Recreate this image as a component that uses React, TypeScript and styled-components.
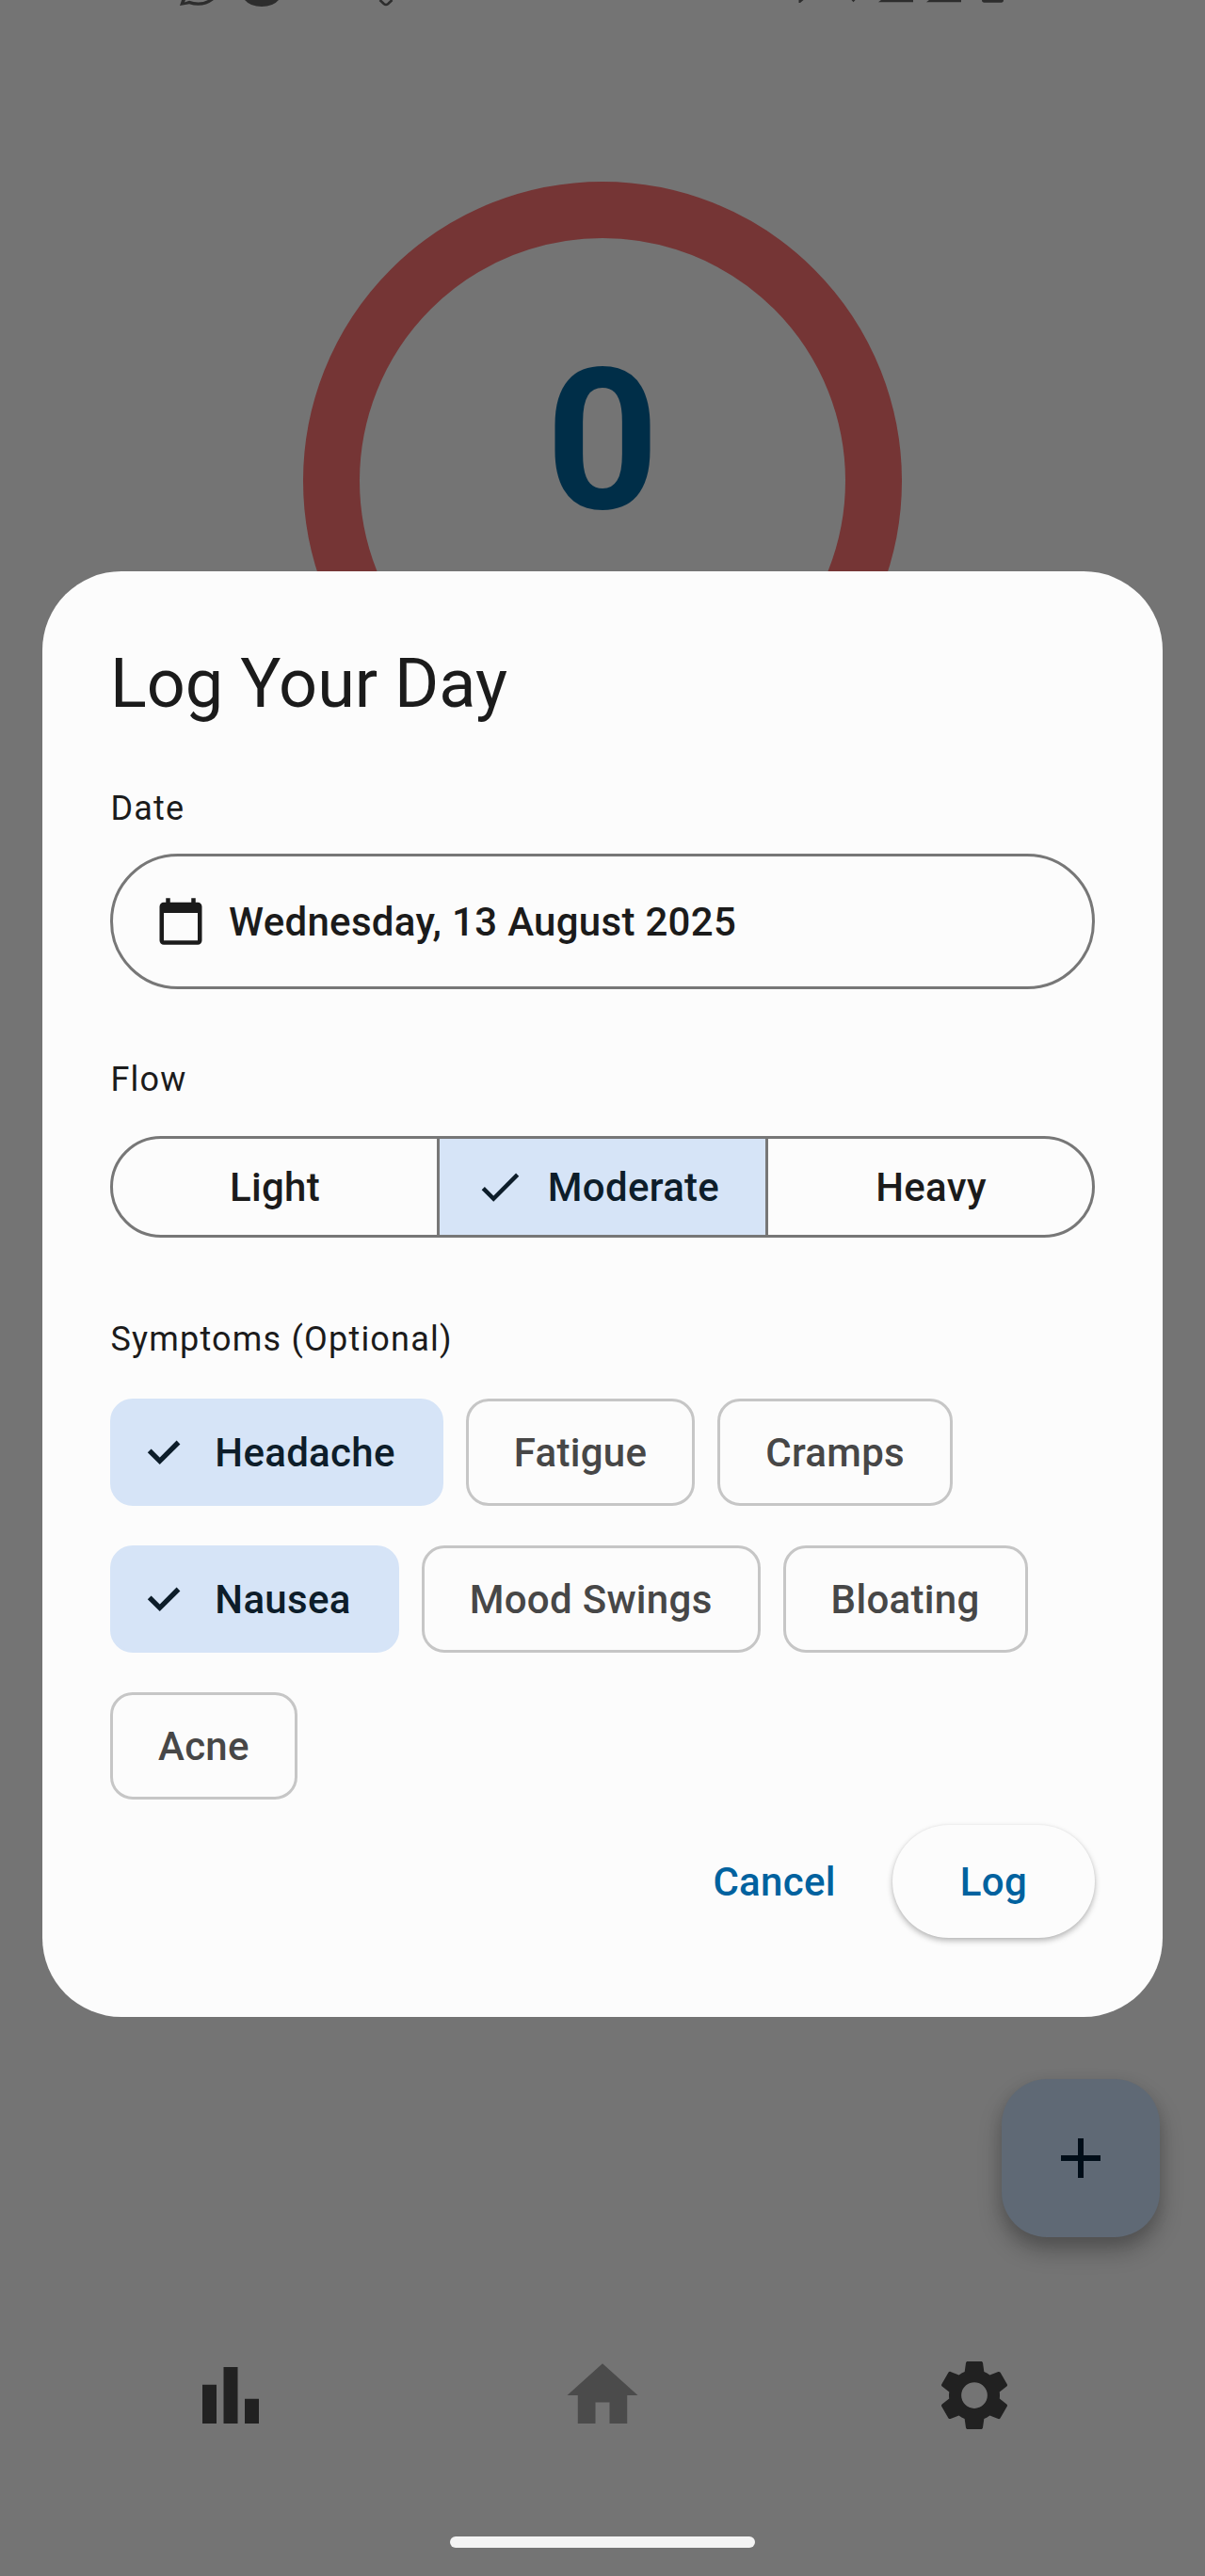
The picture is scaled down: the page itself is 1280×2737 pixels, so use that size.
import React, { useState } from 'react';
import styled, { createGlobalStyle } from 'styled-components';

const GlobalStyle = createGlobalStyle`
  *, *::before, *::after { box-sizing: border-box; }
  body { margin: 0; background: #747474; }
  button { font: inherit; letter-spacing: inherit; cursor: pointer; margin: 0; }
`;

const Screen = styled.div`
  position: relative;
  display: flex;
  flex-direction: column;
  width: 1280px;
  height: 2737px;
  overflow: hidden;
  background: #747474;
  font-family: Roboto, 'Liberation Sans', sans-serif;
  font-size: 42px;
  font-weight: 500;
  letter-spacing: 0.3px;
`;

const StatusBar = styled.header`
  height: 193px;

  svg {
    display: block;
  }
`;

const CycleRing = styled.section`
  display: flex;
  justify-content: center;
  align-self: center;
  width: 636px;
  height: 636px;
  padding-top: 92px;
  border: 60px solid #753535;
  border-radius: 50%;
`;

const DayCount = styled.span`
  height: 246px;
  font-size: 210px;
  line-height: 246px;
  font-weight: 700;
  letter-spacing: 0;
  color: #002e48;
`;

const Spacer = styled.div`
  flex: 1;
`;

const Fab = styled.button`
  position: absolute;
  right: 48px;
  bottom: 360px;
  display: grid;
  place-items: center;
  width: 168px;
  height: 168px;
  padding: 0;
  border: 0;
  border-radius: 48px;
  background: #5f6975;
  color: #000d18;
  box-shadow: 0 14px 24px rgba(0, 0, 0, 0.28), 0 4px 16px rgba(0, 0, 0, 0.08);
`;

const NavBar = styled.nav`
  display: grid;
  grid-template-columns: repeat(3, 1fr);
  justify-items: center;
  padding: 0 48px;
  height: 195px;
`;

const NavItem = styled.button<{ $active?: boolean }>`
  width: 90px;
  height: 90px;
  padding: 0;
  border: 0;
  background: none;
  color: ${(p) => (p.$active ? '#4b4b4b' : '#212121')};
`;

const GestureBar = styled.div`
  align-self: center;
  width: 324px;
  height: 12px;
  margin-bottom: 30px;
  border-radius: 6px;
  background: #f4f4f4;
`;

const ModalLayer = styled.div`
  position: absolute;
  inset: 0;
  display: flex;
  justify-content: center;
  align-items: flex-start;
  padding-top: 607px;
  pointer-events: none;
`;

const Dialog = styled.div`
  display: flex;
  flex-direction: column;
  width: 1190px;
  height: 1536px;
  padding: 72px;
  border-radius: 84px;
  background: #fcfcfc;
  color: #1b1b1b;
  pointer-events: auto;
`;

const Title = styled.h1`
  margin: 0 0 60px;
  font-size: 72px;
  line-height: 96px;
  font-weight: 400;
  letter-spacing: 0;
`;

const FieldLabel = styled.div<{ $gap: number }>`
  margin-bottom: ${(p) => p.$gap}px;
  padding-left: 0.5px;
  font-size: 36px;
  line-height: 48px;
  font-weight: 400;
  letter-spacing: 1.2px;
`;

const DateField = styled.button`
  display: flex;
  align-items: center;
  gap: 24px;
  height: 144px;
  margin-bottom: 72px;
  padding: 0 45px;
  border: 3px solid #777777;
  border-radius: 72px;
  background: none;
  color: inherit;
`;

const Segments = styled.div`
  display: grid;
  grid-template-columns: 344px 349px 347px;
  height: 108px;
  margin-bottom: 84px;
  border: 3px solid #777777;
  border-radius: 54px;
  overflow: hidden;
`;

const Segment = styled.button<{ $selected: boolean }>`
  display: flex;
  align-items: center;
  justify-content: center;
  gap: 24px;
  padding: ${(p) => (p.$selected ? '0 12px 0 0' : '0')};
  border: 0 solid #777777;
  background: ${(p) => (p.$selected ? '#d6e4f7' : 'transparent')};
  color: ${(p) => (p.$selected ? '#0d1d2a' : 'inherit')};

  & + & {
    border-left-width: 3px;
  }

  &:last-child {
    padding-left: 2px;
  }
`;

const Chips = styled.div`
  display: flex;
  flex-wrap: wrap;
  gap: 42px 24px;
  margin-bottom: 27px;
`;

const Chip = styled.button<{ $selected: boolean }>`
  display: flex;
  align-items: center;
  gap: 31.3px;
  height: 114px;
  padding: ${(p) => (p.$selected ? '0 48px 0 32px' : '0 48px')};
  border: 3px solid ${(p) => (p.$selected ? '#d6e4f7' : '#c6c6c6')};
  border-radius: 24px;
  background: ${(p) => (p.$selected ? '#d6e4f7' : 'transparent')};
  color: ${(p) => (p.$selected ? '#0d1d2a' : '#474747')};
`;

const Actions = styled.div`
  display: flex;
  justify-content: flex-end;
  gap: 24px;
`;

const ActionButton = styled.button<{ $raised?: boolean }>`
  height: 120px;
  padding: 0 ${(p) => (p.$raised ? 72 : 36)}px;
  border: 0;
  border-radius: 60px;
  background: #fcfcfc;
  color: #00629f;
  box-shadow: ${(p) =>
    p.$raised ? '0 3px 6px rgba(0, 0, 0, 0.28), 0 0 3px rgba(0, 0, 0, 0.05)' : 'none'};
`;

const icons = {
  calendar:
    'M20 3h-1V1h-2v2H7V1H5v2H4c-1.1 0-2 .9-2 2v16c0 1.1.9 2 2 2h16c1.1 0 2-.9 2-2V5c0-1.1-.9-2-2-2zm0 18H4V8h16v13z',
  check: 'M9 16.17 4.83 12l-1.42 1.41L9 19 21 7l-1.41-1.41z',
  add: 'M19 13h-6v6h-2v-6H5v-2h6V5h2v6h6v2z',
  chart: 'M4 9h4v11H4zm12 4h4v7h-4zm-6-9h4v16h-4z',
  home: 'M10 20v-6h4v6h5v-8h3L12 3 2 12h3v8z',
  settings:
    'M19.14 12.94c.04-.3.06-.61.06-.94 0-.32-.02-.64-.07-.94l2.03-1.58c.18-.14.23-.41.12-.61l-1.92-3.32c-.12-.22-.37-.29-.59-.22l-2.39.96c-.5-.38-1.03-.7-1.62-.94l-.36-2.54c-.04-.24-.24-.41-.48-.41h-3.84c-.24 0-.43.17-.47.41l-.36 2.54c-.59.24-1.13.57-1.62.94l-2.39-.96c-.22-.08-.47 0-.59.22L2.74 8.87c-.12.21-.08.47.12.61l2.03 1.58c-.05.3-.09.63-.09.94s.02.64.07.94l-2.03 1.58c-.18.14-.23.41-.12.61l1.92 3.32c.12.22.37.29.59.22l2.39-.96c.5.38 1.03.7 1.62.94l.36 2.54c.05.24.24.41.48.41h3.84c.24 0 .44-.17.47-.41l.36-2.54c.59-.24 1.13-.56 1.62-.94l2.39.96c.22.08.47 0 .59-.22l1.92-3.32c.12-.22.07-.47-.12-.61l-2.01-1.58zM12 15.7c-2.04 0-3.7-1.66-3.7-3.7s1.66-3.7 3.7-3.7 3.7 1.66 3.7 3.7-1.66 3.7-3.7 3.7z',
};

function Icon({ name, size }: { name: keyof typeof icons; size: number }) {
  return (
    <svg width={size} height={size} viewBox="0 0 24 24" fill="currentColor" display="block">
      <path d={icons[name]} />
    </svg>
  );
}

function ChipCheck() {
  return (
    <svg width="45" height="45" viewBox="0 0 45 45" fill="none" stroke="currentColor" strokeWidth="5.4">
      <path d="M6.7 20.3 17.7 31.3 37.5 11.5" />
    </svg>
  );
}

const flows = ['Light', 'Moderate', 'Heavy'];
const symptoms = ['Headache', 'Fatigue', 'Cramps', 'Nausea', 'Mood Swings', 'Bloating', 'Acne'];

export default function App() {
  const [flow, setFlow] = useState('Moderate');
  const [picked, setPicked] = useState<string[]>(['Headache', 'Nausea']);

  const toggle = (name: string) =>
    setPicked((prev) => (prev.includes(name) ? prev.filter((n) => n !== name) : [...prev, name]));

  return (
    <>
      <GlobalStyle />
      <Screen>
        <StatusBar>
          <svg width="1280" height="10" viewBox="0 0 1280 10" fill="#2d2d2d">
            <path d="M193 0h4l-1 2.4 5-1.6q11 3.8 20-.8h6Q215 9 201 4.2L191 6Z" />
            <path d="M260 0h36q-6 7-18 7t-18-7Z" />
            <path d="M403.5 0 408 4.2q2 1.6 4 0L416.5 0" fill="none" stroke="#2d2d2d" strokeWidth="2.6" />
            <path d="M848.5 0h5l-3.5 3h-1.5ZM904.5 0h4l-2 2.2ZM936 0h34v2.3h-37ZM987 0h34v2.3h-37ZM1043 0h23q0 2.7-2.5 2.7h-18q-2.5 0-2.5-2.7Z" />
          </svg>
        </StatusBar>
        <CycleRing>
          <DayCount>0</DayCount>
        </CycleRing>
        <Spacer />
        <Fab aria-label="Add">
          <Icon name="add" size={72} />
        </Fab>
        <NavBar>
          <NavItem aria-label="Statistics">
            <Icon name="chart" size={90} />
          </NavItem>
          <NavItem aria-label="Home" $active>
            <Icon name="home" size={90} />
          </NavItem>
          <NavItem aria-label="Settings">
            <Icon name="settings" size={90} />
          </NavItem>
        </NavBar>
        <GestureBar />

        <ModalLayer>
          <Dialog role="dialog">
            <Title>Log Your Day</Title>
            <FieldLabel $gap={24}>Date</FieldLabel>
            <DateField>
              <Icon name="calendar" size={54} />
              Wednesday, 13 August 2025
            </DateField>
            <FieldLabel $gap={36}>Flow</FieldLabel>
            <Segments>
              {flows.map((name) => (
                <Segment key={name} $selected={flow === name} onClick={() => setFlow(name)}>
                  {flow === name && <Icon name="check" size={54} />}
                  {name}
                </Segment>
              ))}
            </Segments>
            <FieldLabel $gap={39}>Symptoms (Optional)</FieldLabel>
            <Chips>
              {symptoms.map((name) => (
                <Chip key={name} $selected={picked.includes(name)} onClick={() => toggle(name)}>
                  {picked.includes(name) && <ChipCheck />}
                  {name}
                </Chip>
              ))}
            </Chips>
            <Actions>
              <ActionButton>Cancel</ActionButton>
              <ActionButton $raised>Log</ActionButton>
            </Actions>
          </Dialog>
        </ModalLayer>
      </Screen>
    </>
  );
}
